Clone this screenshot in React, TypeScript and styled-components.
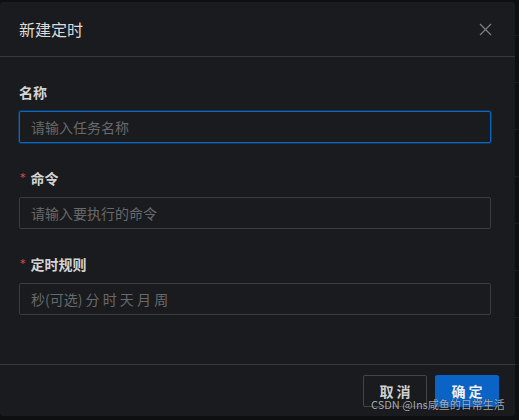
import styled, { createGlobalStyle } from 'styled-components'

// 全域樣式
const GlobalStyle = createGlobalStyle`
  body {
    margin: 0;
    background: #0e0f11;
    font-family: "Noto Sans CJK SC", "Noto Sans", sans-serif;
  }
`

// 欄位資料
const fields = [
  { label: '名称', placeholder: '请输入任务名称', required: false, focused: true },
  { label: '命令', placeholder: '请输入要执行的命令', required: true, focused: false },
  { label: '定时规则', placeholder: '秒(可选) 分 时 天 月 周', required: true, focused: false },
]

// UI元件
const App = () => {
  return (
    <>
      <GlobalStyle />
      <Page>
        <Modal>
          <Header>
            <Title>新建定时</Title>
            <Close aria-label="close">
              <svg width="13" height="13" viewBox="0 0 13 13">
                <path d="M1 1 L12 12 M12 1 L1 12" stroke="#7e7f82" strokeWidth="1.2" fill="none" />
              </svg>
            </Close>
          </Header>
          <Body>
            {fields.map((f) => (
              <FormItem key={f.label}>
                <Label>
                  {f.required && <Star>*</Star>}
                  {f.label}
                </Label>
                <Input placeholder={f.placeholder} $focused={f.focused} />
              </FormItem>
            ))}
          </Body>
          <Footer>
            <Button>取 消</Button>
            <Button $primary>确 定</Button>
          </Footer>
          <Watermark>CSDN @Ins咸鱼的日常生活</Watermark>
        </Modal>
      </Page>
    </>
  )
}

// UI元件樣式
const Page = styled.div`
  height: 420px;
  padding-top: 2px;
  box-sizing: border-box;
  background: repeating-linear-gradient(
    to bottom,
    #0e0f11 0px,
    #0e0f11 46px,
    #1e1f22 46px,
    #1e1f22 47px
  );
  background-position: 0 -11px;
`

const Modal = styled.div`
  position: relative;
  width: 515px;
  height: 414px;
  background: #1a1b1e;
  border-radius: 3px;
  display: flex;
  flex-direction: column;
`

const Header = styled.div`
  height: 54px;
  padding: 0 23px 0 19px;
  display: flex;
  align-items: center;
  justify-content: space-between;
  border-bottom: 1px solid #38393c;
`

const Title = styled.span`
  font-size: 16px;
  color: #dcdcdc;
`

const Close = styled.span`
  display: flex;
  width: 13px;
  height: 13px;
`

const Body = styled.div`
  padding: 24px 24px 24px 19px;
  flex: 1;
`

const FormItem = styled.div`
  margin-bottom: 24px;
`

const Label = styled.div`
  height: 22px;
  line-height: 22px;
  margin-bottom: 8px;
  font-size: 14px;
  font-weight: 600;
  color: #d4d4d4;
  display: flex;
  align-items: center;
`

const Star = styled.span`
  color: #f04a4c;
  font-family: "DejaVu Sans", sans-serif;
  font-size: 11px;
  font-weight: 400;
  margin: 0 5px 0 1px;
`

const Input = styled.input<{ $focused?: boolean }>`
  display: block;
  width: 100%;
  height: 32px;
  box-sizing: border-box;
  padding: 0 11px;
  border-radius: 2px;
  background: #1a1b1e;
  border: 1px solid ${(p) => (p.$focused ? '#0a67c4' : '#3b3c3f')};
  box-shadow: ${(p) => (p.$focused ? '0 0 0 1px rgba(10, 103, 196, 0.35)' : 'none')};
  outline: none;
  font-family: inherit;
  font-size: 14px;
  color: #ddd;
  &::placeholder {
    color: #68696b;
  }
`

const Footer = styled.div`
  height: 52px;
  box-sizing: border-box;
  border-top: 1px solid #38393c;
  padding: 0 16px;
  display: flex;
  align-items: center;
  justify-content: flex-end;
  gap: 8px;
`

const Button = styled.button<{ $primary?: boolean }>`
  width: 64px;
  height: 32px;
  border-radius: 2px;
  font-family: inherit;
  font-size: 14px;
  font-weight: 700;
  color: ${(p) => (p.$primary ? '#f0f0f0' : '#d0d0d0')};
  background: ${(p) => (p.$primary ? '#0b63c5' : 'transparent')};
  border: 1px solid ${(p) => (p.$primary ? '#0b63c5' : '#444548')};
  padding: 0;
`

const Watermark = styled.span`
  position: absolute;
  left: 371px;
  top: 394px;
  font-family: "Noto Sans CJK SC", sans-serif;
  font-size: 11px;
  line-height: 16px;
  color: rgba(200, 200, 200, 0.85);
  text-shadow: 0 0 1px rgba(0, 0, 0, 0.6);
  white-space: nowrap;
`

export default App
